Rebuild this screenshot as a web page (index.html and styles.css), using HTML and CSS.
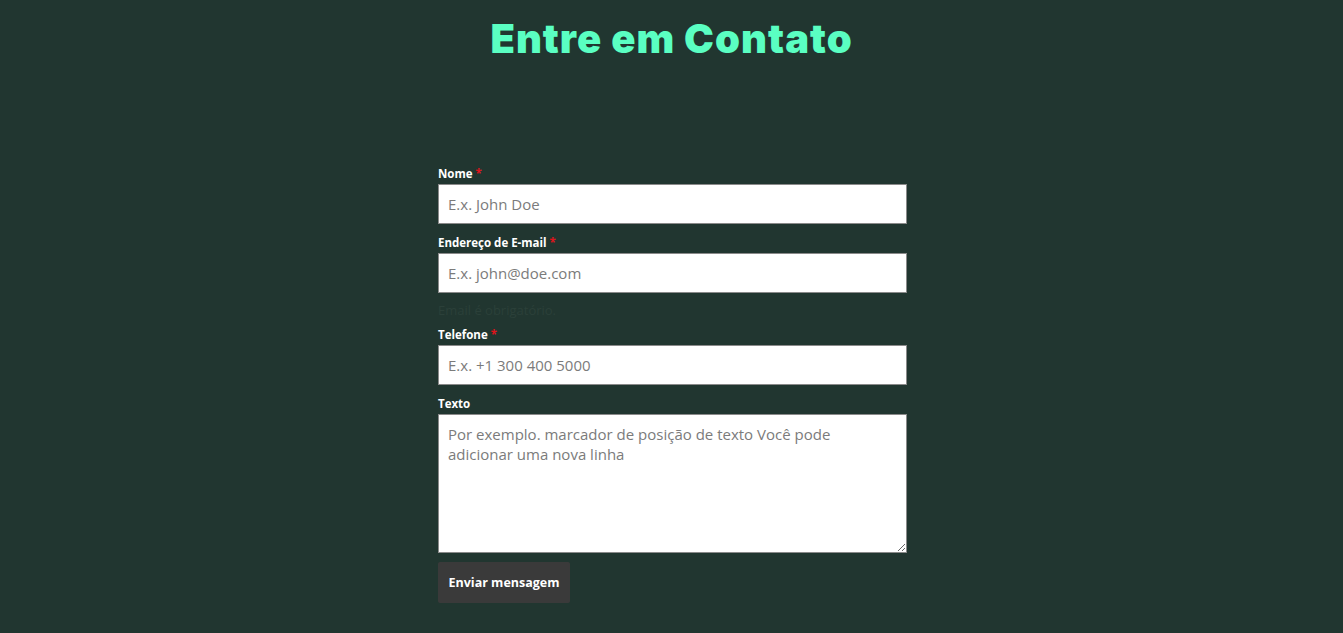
FILE: index.html
```html
<!DOCTYPE html>
<html lang="pt">
<head>
<meta charset="utf-8">
<link rel="stylesheet" href="styles.css">
</head>
<body>
<h1 class="title">Entre em Contato</h1>
<form class="form">
  <label class="label">Nome <span class="req">*</span></label>
  <input class="field" type="text" placeholder="E.x. John Doe">
  <label class="label">Endereço de E-mail <span class="req">*</span></label>
  <input class="field" type="email" placeholder="E.x. john@doe.com">
  <div class="error">Email é obrigatório.</div>
  <label class="label">Telefone <span class="req">*</span></label>
  <input class="field" type="tel" placeholder="E.x. +1 300 400 5000">
  <label class="label">Texto</label>
  <textarea class="field area" placeholder="Por exemplo. marcador de posição de texto Você pode adicionar uma nova linha"></textarea>
  <button class="btn" type="button">Enviar mensagem</button>
</form>
</body>
</html>
```
FILE: styles.css
```css
html, body {
  margin: 0;
  padding: 0;
  background: #213630;
}
body {
  font-family: "Open Sans", "Noto Sans", sans-serif;
  height: 633px;
  overflow: hidden;
}
.title {
  margin: 0;
  padding-top: 14px;
  text-align: center;
  font-family: "Inter", sans-serif;
  font-weight: 900;
  font-size: 40px;
  line-height: 50px;
  color: #5affc2;
  letter-spacing: 1px;
}
.form {
  width: 469px;
  margin: 102px 0 0 438px;
  display: flex;
  flex-direction: column;
}
.label {
  font-size: 11.5px;
  font-weight: 700;
  color: #ffffff;
  line-height: 14px;
  padding-top: 1px;
  margin-bottom: 3px;
}
.req {
  color: #e0131b;
}
.field {
  box-sizing: border-box;
  width: 469px;
  height: 40px;
  border: 1px solid #8a8a8a;
  background: #fff;
  padding: 0 9px;
  font-family: "Open Sans", "Noto Sans", sans-serif;
  font-size: 15px;
  color: #333;
  margin: 0 0 11px;
  outline: none;
}
.field::placeholder {
  color: #7b7b7b;
}
.area {
  height: 139px;
  padding: 9px 9px;
  line-height: 20px;
  resize: vertical;
  margin-bottom: 9px;
}
.error {
  font-size: 13px;
  color: #2b4039;
  line-height: 18px;
  margin: -3px 0 8px;
}
.btn {
  align-self: flex-start;
  height: 41px;
  width: 132px;
  border: none;
  border-radius: 2px;
  background: #3a3a3a;
  color: #fff;
  font-family: "Open Sans", "Noto Sans", sans-serif;
  font-weight: 700;
  font-size: 12.5px;
  padding: 0;
}
```
